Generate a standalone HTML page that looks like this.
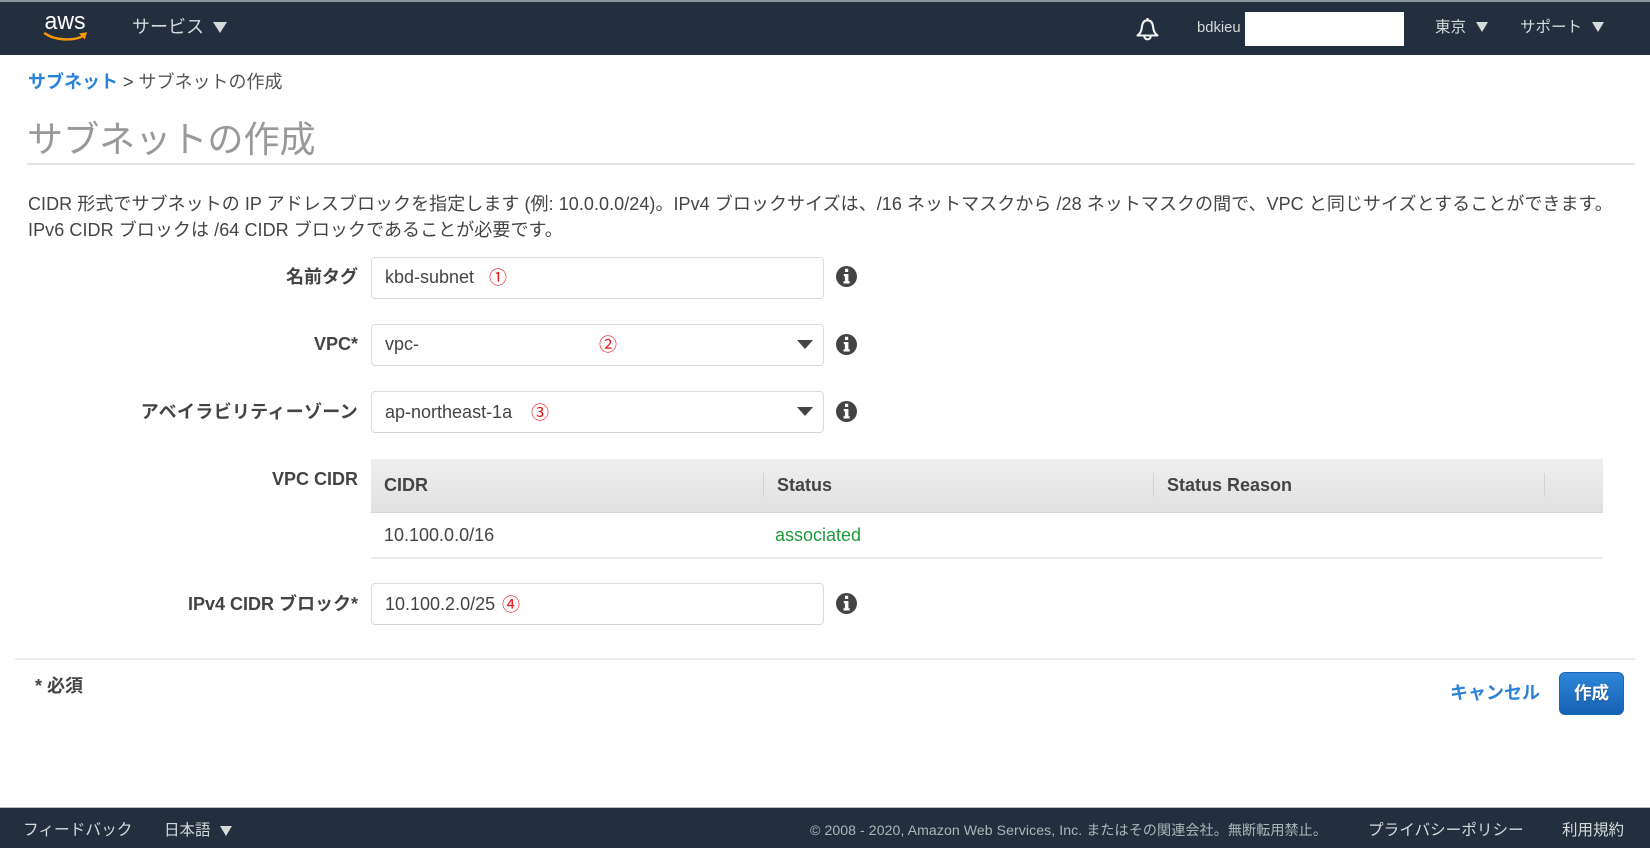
<!DOCTYPE html>
<html lang="ja">
<head>
<meta charset="utf-8">
<title>サブネットの作成</title>
<style>
html,body{margin:0;padding:0;background:#fff;}
body{width:1650px;height:848px;position:relative;overflow:hidden;font-family:"Liberation Sans","Noto Sans CJK JP",sans-serif;color:#444;}
.a{position:absolute;white-space:nowrap;}
.bar{position:absolute;left:0;width:1650px;background:#232f3e;}
.nav{color:#d5dbdb;}
.tri{position:absolute;width:0;height:0;border-left:7px solid transparent;border-right:7px solid transparent;border-top:11px solid #d5dbdb;}
.lbl{position:absolute;right:1292px;font-size:18px;font-weight:bold;line-height:24px;white-space:nowrap;color:#444;}
.inp{position:absolute;left:371px;width:451px;height:40px;border:1px solid #dcdcdc;border-bottom-color:#d4d4d4;border-radius:4px;background:#fff;}
.val{position:absolute;left:385px;font-size:18px;line-height:24px;color:#444;white-space:nowrap;}
.num{position:absolute;font-size:18px;line-height:24px;color:#e8141c;white-space:nowrap;}
.dd{position:absolute;left:797px;width:0;height:0;border-left:8px solid transparent;border-right:8px solid transparent;border-top:9px solid #444;}
.info{position:absolute;left:836px;width:21px;height:21px;}
.th{position:absolute;top:473px;font-size:18px;font-weight:bold;line-height:24px;color:#444;white-space:nowrap;}
.sep{position:absolute;top:473px;width:1px;height:24px;background:#d2d2d2;}
</style>
</head>
<body>
<!-- header -->
<div class="bar" style="top:0;height:55px;border-top:2px solid #8d959c;box-sizing:border-box;"></div>
<svg class="a" style="left:42px;top:10px" width="50" height="34" viewBox="0 0 50 34">
  <text x="2.5" y="19" font-family="Liberation Sans" font-size="24" fill="#fff" textLength="41" lengthAdjust="spacingAndGlyphs">aws</text>
  <path d="M3 23.500C13 30.500 32 31.500 42 25.500" fill="none" stroke="#f90" stroke-width="2.400" stroke-linecap="round"/>
  <path d="M37 23.400L45 22.300L42.800 29.500Z" fill="#f90"/>
</svg>
<div class="a nav" style="left:132px;top:14px;font-size:18px;line-height:27px;">サービス</div>
<div class="tri" style="left:213px;top:22px"></div>
<svg class="a" style="left:1135px;top:16px" width="25" height="27" viewBox="0 0 25 27" fill="none" stroke="#f2f3f3" stroke-width="2.100" stroke-linejoin="round">
  <path d="M2.500 19.500C6 17 6.500 14 7 10.500C7.500 6.500 9.500 4.300 12.500 4.300C15.500 4.300 17.500 6.500 18 10.500C18.500 14 19 17 22.500 19.500Z"/>
  <path d="M12.500 2V4.300"/>
  <path d="M9.300 20C9.300 24.500 15.700 24.500 15.700 20"/>
</svg>
<div class="a nav" style="left:1197px;top:17px;font-size:14.800px;line-height:22px;">bdkieu</div>
<div class="a" style="left:1245px;top:12px;width:159px;height:34px;background:#fff;"></div>
<div class="a nav" style="left:1435px;top:17px;font-size:15.500px;line-height:22px;">東京</div>
<div class="tri" style="left:1476px;top:22px;border-left-width:6.500px;border-right-width:6.500px;border-top-width:10px"></div>
<div class="a nav" style="left:1520px;top:17px;font-size:15.500px;line-height:22px;">サポート</div>
<div class="tri" style="left:1592px;top:22px;border-left-width:6.500px;border-right-width:6.500px;border-top-width:10px"></div>

<!-- breadcrumb -->
<div class="a" style="left:28px;top:69px;font-size:18px;line-height:27px;"><span style="color:#2a83d9;font-weight:bold;">サブネット</span> <span style="color:#444;">&gt;</span> <span style="color:#555;">サブネットの作成</span></div>
<!-- title -->
<div class="a" style="left:27px;top:113px;font-size:36.100px;line-height:54px;color:#999;">サブネットの作成</div>
<div class="a" style="left:27px;top:163px;width:1608px;height:2px;background:#e3e3e3;"></div>

<!-- description -->
<div class="a" style="left:28px;top:191px;font-size:18px;line-height:26px;color:#444;letter-spacing:.055px;">CIDR 形式でサブネットの IP アドレスブロックを指定します (例: 10.0.0.0/24)。IPv4 ブロックサイズは、/16 ネットマスクから /28 ネットマスクの間で、VPC と同じサイズとすることができます。</div>
<div class="a" style="left:28px;top:217px;font-size:18px;line-height:26px;color:#444;letter-spacing:.07px;">IPv6 CIDR ブロックは /64 CIDR ブロックであることが必要です。</div>

<!-- form -->
<div class="lbl" style="top:265px">名前タグ</div>
<div class="inp" style="top:257px"></div>
<div class="val" style="top:265px">kbd-subnet</div>
<div class="num" style="top:266px;left:489px">①</div>
<svg class="info" style="top:266px" viewBox="0 0 21 21"><circle cx="10.500" cy="10.500" r="10.500" fill="#444"/><path d="M9 2.800h3.200v3.200H9zM7.800 8h4.600v7.200h1.300v2.300H7.500v-2.300h1.400v-4.900H7.800z" fill="#fff"/></svg>

<div class="lbl" style="top:332px">VPC*</div>
<div class="inp" style="top:324px"></div>
<div class="val" style="top:332px">vpc-</div>
<div class="num" style="top:333px;left:599px">②</div>
<div class="dd" style="top:340px"></div>
<svg class="info" style="top:334px" viewBox="0 0 21 21"><circle cx="10.500" cy="10.500" r="10.500" fill="#444"/><path d="M9 2.800h3.200v3.200H9zM7.800 8h4.600v7.200h1.300v2.300H7.500v-2.300h1.400v-4.900H7.800z" fill="#fff"/></svg>

<div class="lbl" style="top:400px;letter-spacing:.3px">アベイラビリティーゾーン</div>
<div class="inp" style="top:391px"></div>
<div class="val" style="top:400px">ap-northeast-1a</div>
<div class="num" style="top:401px;left:531px">③</div>
<div class="dd" style="top:407px"></div>
<svg class="info" style="top:401px" viewBox="0 0 21 21"><circle cx="10.500" cy="10.500" r="10.500" fill="#444"/><path d="M9 2.800h3.200v3.200H9zM7.800 8h4.600v7.200h1.300v2.300H7.500v-2.300h1.400v-4.900H7.800z" fill="#fff"/></svg>

<div class="lbl" style="top:467px">VPC CIDR</div>
<div class="a" style="left:371px;top:459px;width:1232px;height:54px;background:linear-gradient(#efefef,#e1e1e1);border-bottom:1px solid #d5d5d5;box-sizing:border-box;"></div>
<div class="th" style="left:384px">CIDR</div>
<div class="sep" style="left:763px"></div>
<div class="th" style="left:777px">Status</div>
<div class="sep" style="left:1153px"></div>
<div class="th" style="left:1167px">Status Reason</div>
<div class="sep" style="left:1544px"></div>
<div class="a" style="left:384px;top:523px;font-size:18px;line-height:24px;color:#444;">10.100.0.0/16</div>
<div class="a" style="left:775px;top:523px;font-size:18px;line-height:24px;color:#1d9a3c;">associated</div>
<div class="a" style="left:371px;top:557px;width:1232px;height:2px;background:#ececec;"></div>

<div class="lbl" style="top:592px">IPv4 CIDR ブロック*</div>
<div class="inp" style="top:583px"></div>
<div class="val" style="top:592px">10.100.2.0/25</div>
<div class="num" style="top:593px;left:502px">④</div>
<svg class="info" style="top:593px" viewBox="0 0 21 21"><circle cx="10.500" cy="10.500" r="10.500" fill="#444"/><path d="M9 2.800h3.200v3.200H9zM7.800 8h4.600v7.200h1.300v2.300H7.500v-2.300h1.400v-4.900H7.800z" fill="#fff"/></svg>

<div class="a" style="left:15px;top:658px;width:1620px;height:2px;background:#ebebeb;"></div>
<div class="a" style="left:35px;top:674px;font-size:18px;font-weight:bold;line-height:24px;color:#444;">* 必須</div>
<div class="a" style="left:1450px;top:680px;font-size:18px;font-weight:bold;line-height:27px;color:#2a83d9;">キャンセル</div>
<div class="a" style="left:1559px;top:672px;width:65px;height:43px;box-sizing:border-box;border:1px solid #1a66b5;border-radius:6px;background:linear-gradient(#2f86d8,#1461b4);color:#fff;font-size:17.500px;font-weight:bold;line-height:40px;text-align:center;text-shadow:0 1px 1px rgba(0,0,0,.35);">作成</div>

<!-- footer -->
<div class="bar" style="top:807px;height:41px;border-top:1px solid #b9bdc2;box-sizing:border-box;"></div>
<div class="a nav" style="left:23px;top:819px;font-size:15.700px;line-height:24px;">フィードバック</div>
<div class="a nav" style="left:164px;top:819px;font-size:15.500px;line-height:24px;">日本語</div>
<div class="tri" style="left:220px;top:826px;border-left-width:6.500px;border-right-width:6.500px;border-top-width:10px"></div>
<div class="a" style="left:810px;top:819px;font-size:14.100px;line-height:22px;color:#aab7b8;letter-spacing:.07px;">© 2008 - 2020, Amazon Web Services, Inc. またはその関連会社。無断転用禁止。</div>
<div class="a nav" style="left:1368px;top:819px;font-size:15.600px;line-height:24px;">プライバシーポリシー</div>
<div class="a nav" style="left:1562px;top:819px;font-size:15.500px;line-height:24px;">利用規約</div>
</body>
</html>
